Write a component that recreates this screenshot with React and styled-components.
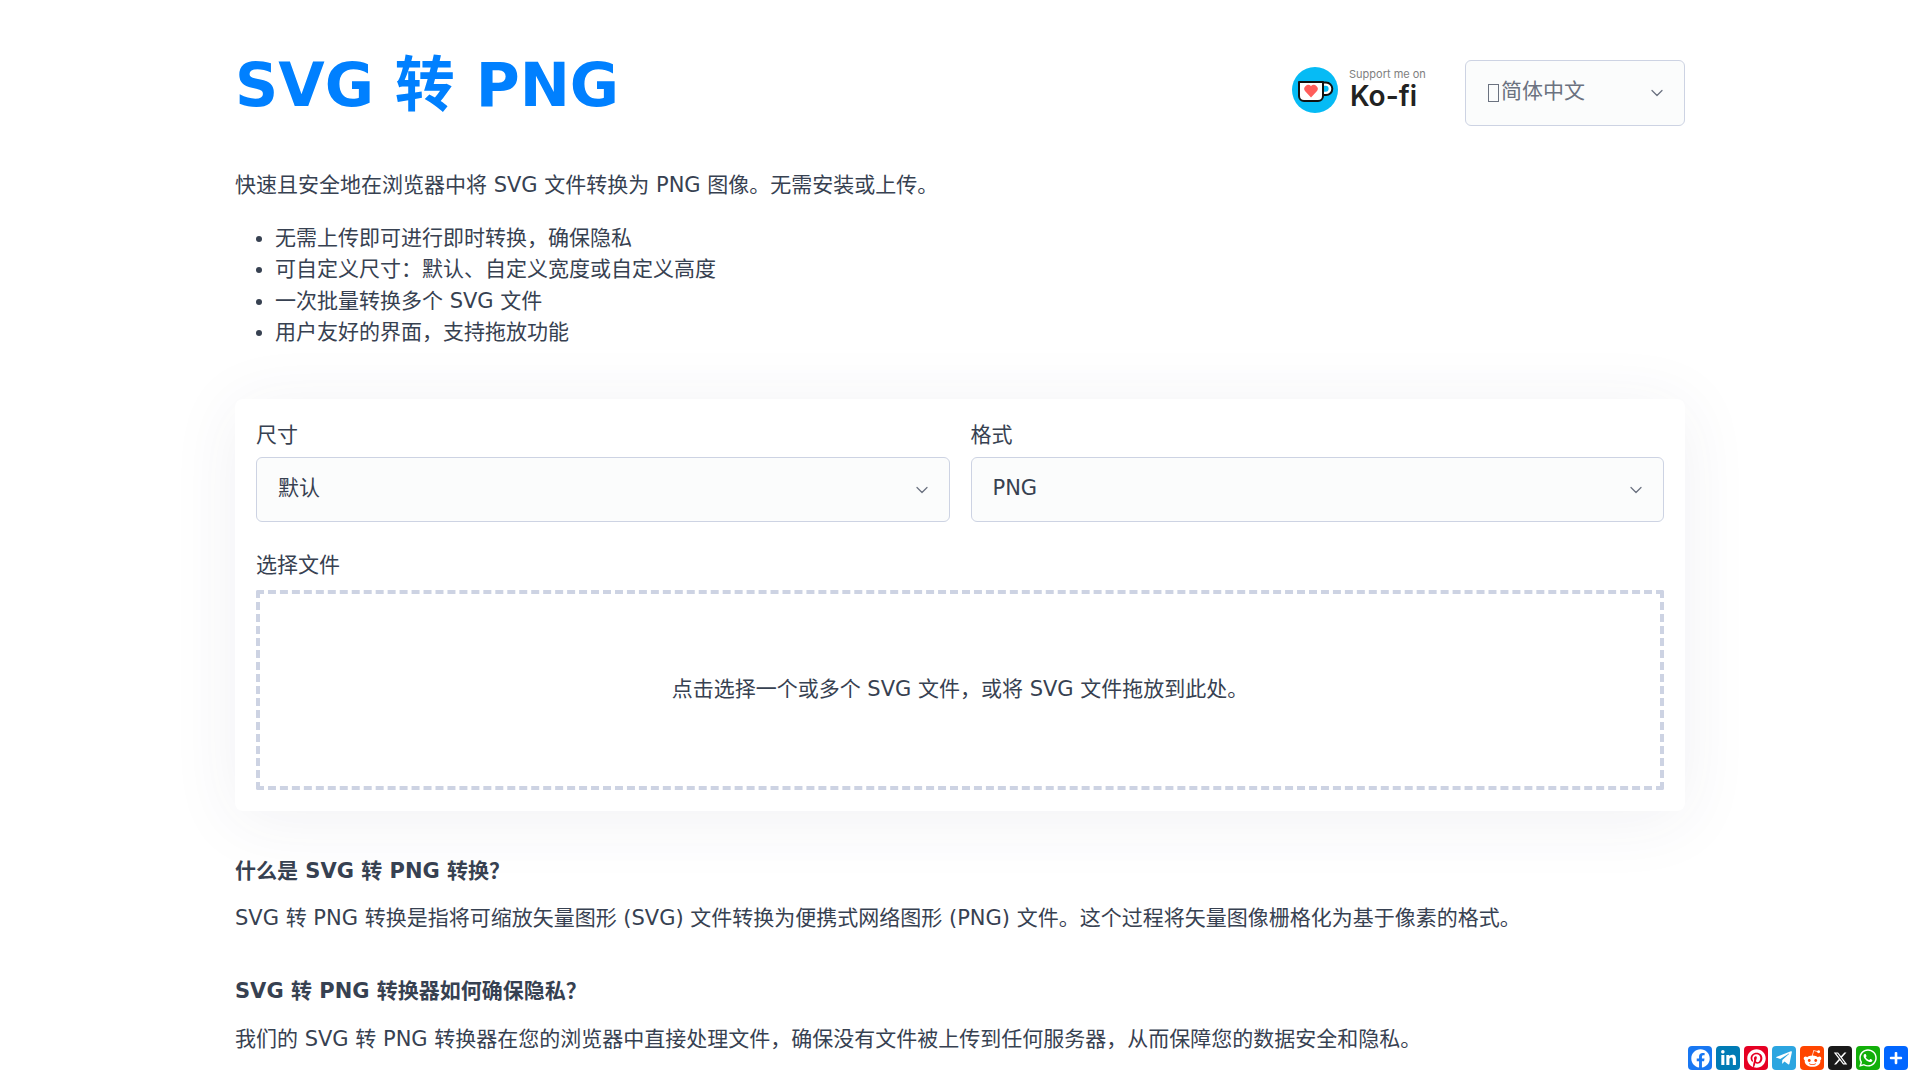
import React from 'react';
import styled, { createGlobalStyle } from 'styled-components';
import { FaFacebook, FaLinkedinIn, FaPinterest, FaTelegramPlane, FaRedditAlien, FaWhatsapp, FaPlus } from 'react-icons/fa';
import { FaXTwitter } from 'react-icons/fa6';
import { ChevronDown } from 'lucide-react';

const GlobalStyle = createGlobalStyle`
  html, body { margin: 0; padding: 0; background: #fff; overflow: hidden; }
  body {
    font-family: "DejaVu Sans", "Noto Sans CJK SC", sans-serif;
    font-size: 21px;
    line-height: 1.5;
    color: #374151;
  }
  * { box-sizing: border-box; }
`;

const Page = styled.div`
  width: 1450px;
  margin: 0 auto;
`;

const Header = styled.header`
  display: flex;
  align-items: flex-start;
  justify-content: space-between;
  height: 170px;
  padding-top: 40px;
`;

const Title = styled.h1`
  margin: 0;
  font-size: 60px;
  font-weight: 700;
  line-height: 90px;
  color: #0080ff;
`;

const HeaderRight = styled.div`
  display: flex;
  align-items: center;
  gap: 40px;
  margin-top: 20px;
`;

const KofiLink = styled.a`
  display: flex;
  align-items: center;
  gap: 12px;
  margin-bottom: 6px;
  text-decoration: none;
`;

const KofiText = styled.span`
  display: flex;
  flex-direction: column;
  gap: 1px;
  width: 75px;
  margin-bottom: 3px;
  font-family: "Inter", sans-serif;
  white-space: nowrap;
`;

const KofiSmall = styled.span`
  margin-left: -1px;
  font-size: 11px;
  line-height: 13px;
  color: #808080;
`;

const KofiBig = styled.span`
  font-size: 28px;
  line-height: 28px;
  font-weight: 600;
  color: #222;
`;

const SelectBox = styled.div`
  display: flex;
  align-items: center;
  justify-content: space-between;
  width: ${p => p.$width || '100%'};
  height: ${p => p.$height || '65px'};
  padding: 0 17px 2px 21px;
  background: #fbfcfc;
  border: 1px solid #cdd3e3;
  border-radius: 6px;
  color: ${p => p.$muted ? '#6b7280' : '#374151'};
  svg { color: #6b7280; flex: none; margin-top: 2px; }
`;

const SelectValue = styled.span`
  display: flex;
  align-items: center;
`;

// the flag emoji has no glyph in the reference, it shows as an empty box
const MissingGlyph = styled.span`
  width: 11px;
  height: 18px;
  margin: 2px 2px 0 1px;
  border: 1px solid #6b7280;
`;

const Intro = styled.p`
  margin: 0 0 21px;
`;

const Bullets = styled.ul`
  margin: 0 0 50px;
  padding-left: 40px;
`;

const Card = styled.section`
  padding: 21px 21px 21px;
  border-radius: 8px;
  background: #fff;
  box-shadow: 0 8px 70px rgba(50, 50, 93, 0.07);
`;

const FieldRow = styled.div`
  display: grid;
  grid-template-columns: 1fr 1fr;
  gap: 21px;
  margin-bottom: 28px;
`;

const Label = styled.label`
  display: block;
  margin-bottom: 6px;
`;

const DropZone = styled.div`
  display: flex;
  align-items: center;
  justify-content: center;
  height: 200px;
  margin-top: 8px;
  border: 4px dashed #cdd3e3;
  border-radius: 2px;
`;

const Faq = styled.div`
  margin-top: 45px;
`;

const FaqTitle = styled.h3`
  margin: 0 0 ${p => p.$gap || 15.5}px;
  font-size: 21px;
  font-weight: 700;
`;

const FaqText = styled.p`
  margin: 0 0 42px;
`;

const ShareBar = styled.div`
  position: fixed;
  right: 12px;
  bottom: 10px;
  display: flex;
  gap: 4px;
`;

const ShareIcon = styled.a`
  display: flex;
  align-items: center;
  justify-content: center;
  width: 24px;
  height: 24px;
  border-radius: 4px;
  color: #fff;
  background: ${p => p.$bg};
  font-size: ${p => p.$size}px;
`;

function KofiCup() {
  return (
    <svg width="46" height="46" viewBox="0 0 46 46">
      <circle cx="23" cy="23" r="23" fill="#06bbf5" />
      <path d="M31 15.500h3a6.300 6.300 0 0 1 0 12.600h-3z" fill="#fff" stroke="#111" strokeWidth="2" />
      <path d="M31 18.800h2.600a3 3 0 0 1 0 6h-2.600z" fill="#06bbf5" />
      <path d="M7 15h24v14a5 5 0 0 1-5 5H12a5 5 0 0 1-5-5z" fill="#fff" stroke="#111" strokeWidth="2" strokeLinejoin="round" />
      <path d="M19 30.500l-5.800-6.200a3.900 3.900 0 0 1 5.800-5.200 3.900 3.900 0 0 1 5.800 5.200z" fill="#ff5e5b" />
    </svg>
  );
}

const shares = [
  { Icon: FaFacebook, bg: '#1877f2', size: 19 },
  { Icon: FaLinkedinIn, bg: '#007bb5', size: 17 },
  { Icon: FaPinterest, bg: '#e60023', size: 19 },
  { Icon: FaTelegramPlane, bg: '#2ca5e0', size: 18 },
  { Icon: FaRedditAlien, bg: '#ff4500', size: 19 },
  { Icon: FaXTwitter, bg: '#1a1a1a', size: 15 },
  { Icon: FaWhatsapp, bg: '#12af0a', size: 20 },
  { Icon: FaPlus, bg: '#0166ff', size: 14 },
];

export default function App() {
  return (
    <>
      <GlobalStyle />
      <Page>
        <Header>
          <Title>SVG 转 PNG</Title>
          <HeaderRight>
            <KofiLink href="#">
              <KofiCup />
              <KofiText>
                <KofiSmall>Support me on</KofiSmall>
                <KofiBig>Ko-fi</KofiBig>
              </KofiText>
            </KofiLink>
            <SelectBox $width="220px" $height="66px" $muted>
              <SelectValue><MissingGlyph />简体中文</SelectValue>
              <ChevronDown size={20} strokeWidth={1.5} />
            </SelectBox>
          </HeaderRight>
        </Header>

        <Intro>快速且安全地在浏览器中将 SVG 文件转换为 PNG 图像。无需安装或上传。</Intro>
        <Bullets>
          <li>无需上传即可进行即时转换，确保隐私</li>
          <li>可自定义尺寸：默认、自定义宽度或自定义高度</li>
          <li>一次批量转换多个 SVG 文件</li>
          <li>用户友好的界面，支持拖放功能</li>
        </Bullets>

        <Card>
          <FieldRow>
            <div>
              <Label>尺寸</Label>
              <SelectBox>
                <span>默认</span>
                <ChevronDown size={20} strokeWidth={1.5} />
              </SelectBox>
            </div>
            <div>
              <Label>格式</Label>
              <SelectBox>
                <span>PNG</span>
                <ChevronDown size={20} strokeWidth={1.5} />
              </SelectBox>
            </div>
          </FieldRow>
          <Label>选择文件</Label>
          <DropZone>点击选择一个或多个 SVG 文件，或将 SVG 文件拖放到此处。</DropZone>
        </Card>

        <Faq>
          <FaqTitle>什么是 SVG 转 PNG 转换？</FaqTitle>
          <FaqText>SVG 转 PNG 转换是指将可缩放矢量图形 (SVG) 文件转换为便携式网络图形 (PNG) 文件。这个过程将矢量图像栅格化为基于像素的格式。</FaqText>
          <FaqTitle $gap={16.5}>SVG 转 PNG 转换器如何确保隐私？</FaqTitle>
          <FaqText>我们的 SVG 转 PNG 转换器在您的浏览器中直接处理文件，确保没有文件被上传到任何服务器，从而保障您的数据安全和隐私。</FaqText>
        </Faq>
      </Page>
      <ShareBar>
        {shares.map(({ Icon, bg, size }, i) => (
          <ShareIcon key={i} href="#" $bg={bg} $size={size}>
            <Icon />
          </ShareIcon>
        ))}
      </ShareBar>
    </>
  );
}
